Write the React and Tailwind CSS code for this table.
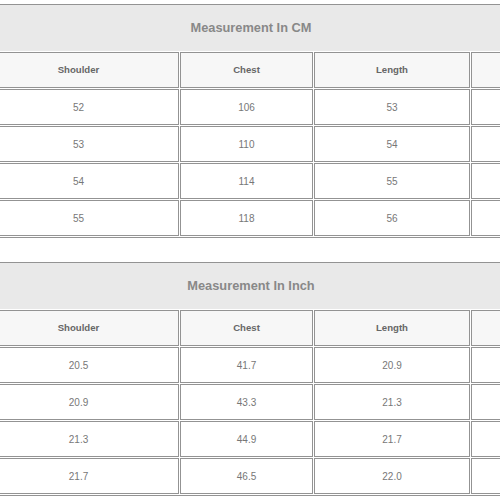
import React from "react";

const blocks = [
  {
    title: "Measurement In CM",
    rows: [
      ["52", "106", "53"],
      ["53", "110", "54"],
      ["54", "114", "55"],
      ["55", "118", "56"],
    ],
  },
  {
    title: "Measurement In Inch",
    rows: [
      ["20.5", "41.7", "20.9"],
      ["20.9", "43.3", "21.3"],
      ["21.3", "44.9", "21.7"],
      ["21.7", "46.5", "22.0"],
    ],
  },
];

function Row({ cells, header }) {
  const base = header
    ? "h-[36px] border border-[#939393] bg-[#f7f7f7] flex items-center justify-center font-bold text-[9.6px] text-[#666]"
    : "h-[36px] border border-[#939393] bg-white flex items-center justify-center text-[10px] text-[#777]";
  return (
    <div className="flex gap-[1px]">
      <div className={`${base} w-[201px] shrink-0`}>{cells[0]}</div>
      <div className={`${base} w-[133px] shrink-0`}>{cells[1]}</div>
      <div className={`${base} w-[156px] shrink-0`}>{cells[2]}</div>
      <div className={`${base} flex-1`}>{cells[3]}</div>
    </div>
  );
}

function Block({ title, rows }) {
  return (
    <div className="w-[550px] border border-[#939393]">
      <div className="h-[46px] bg-[#e9e9e9] flex items-center justify-center font-bold text-[12.8px] text-[#888]">
        {title}
      </div>
      <div className="p-[1px] flex flex-col gap-[1px]">
        <Row header cells={["Shoulder", "Chest", "Length", ""]} />
        {rows.map((r, i) => (
          <Row key={i} cells={[...r, ""]} />
        ))}
      </div>
    </div>
  );
}

export default function App() {
  return (
    <div
      className="w-[500px] h-[500px] overflow-hidden bg-white"
      style={{ fontFamily: '"Liberation Sans", Arial, sans-serif' }}
    >
      <div className="ml-[-24px] pt-[4px] flex flex-col gap-[24px]">
        <Block title={blocks[0].title} rows={blocks[0].rows} />
        <Block title={blocks[1].title} rows={blocks[1].rows} />
      </div>
    </div>
  );
}
